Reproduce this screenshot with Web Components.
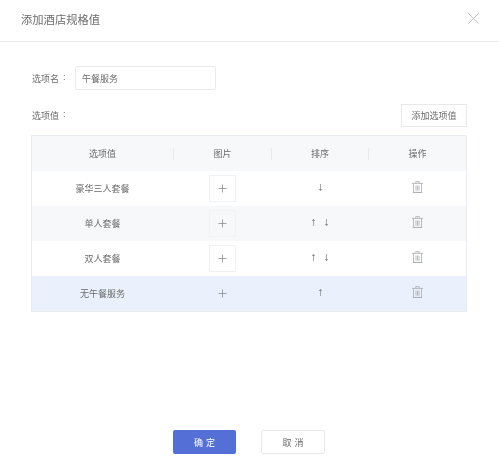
<!DOCTYPE html>
<html lang="zh"><head><meta charset="utf-8"><title>添加酒店规格值</title>
<style>html,body{margin:0;padding:0;background:#fff}body{font-family:"Liberation Sans","Noto Sans CJK SC",sans-serif;color:#666}</style>
</head><body>
<spec-dialog></spec-dialog>
<template id="t-dialog">
<style>
:host{display:flex;flex-direction:column;width:499px;height:471px;box-sizing:border-box;font:9px "Liberation Sans","Noto Sans CJK SC",sans-serif;color:#6b6b6b;overflow:hidden;filter:blur(.3px)}
header{height:42px;flex:none;box-sizing:border-box;border-bottom:1px solid #ebecee;display:flex;align-items:center;justify-content:space-between;padding:0 20px 4px 21px}
h1{margin:0;font-size:11.3px;font-weight:400;color:#6b6b6b}
svg{display:block}
main{flex:1;padding:24px 32px 0 31px;display:flex;flex-direction:column}
.name{display:flex;align-items:center;height:24px}
.lab{width:43px;flex:none;display:flex;gap:4px;padding-left:1px}
.inp{width:141px;height:24px;box-sizing:border-box;border:1px solid #e8eaec;border-radius:2px;padding:0 6px;display:flex;align-items:center}
.val{display:flex;align-items:center;justify-content:space-between;margin:14px 0 8px;height:23px}
.add{width:66px;height:23px;box-sizing:border-box;border:1px solid #e6e8ea;display:flex;align-items:center;justify-content:center;font-size:9px}
footer{flex:none;display:flex;gap:25px;padding:0 0 17px 173px}
.btn{width:64px;height:24px;box-sizing:border-box;border-radius:2px;display:flex;align-items:center;justify-content:center;gap:3px;font-size:9px}
.ok{background:#5470d6;color:#fff;width:63px}
.no{border:1px solid #e6e8ea}
</style>
<header><h1>添加酒店规格值</h1>
<svg width="11" height="11" viewBox="0 0 11 11" fill="none" stroke="#b4b6b9" stroke-width=".8"><path d="M.3.3l10.400 10.400M10.700.3L.3 10.700"/></svg></header>
<main>
<div class="name"><span class="lab"><span>选项名</span><span>:</span></span><div class="inp">午餐服务</div></div>
<div class="val"><span class="lab"><span>选项值</span><span>:</span></span><div class="add">添加选项值</div></div>
<spec-table>
<spec-row name="豪华三人套餐" down></spec-row>
<spec-row name="单人套餐" up down tone="alt"></spec-row>
<spec-row name="双人套餐" up down></spec-row>
<spec-row name="无午餐服务" up tone="sel" flat></spec-row>
</spec-table>
</main>
<footer><div class="btn ok"><span>确</span><span>定</span></div><div class="btn no"><span>取</span><span>消</span></div></footer>
</template>
<template id="t-table">
<style>
:host{display:block;width:436px;box-sizing:border-box;border:1px solid #e8ebef}
.h{display:grid;grid-template-columns:141px 98px 97px 1fr;height:35px;background:#f6f8fa;align-items:center;text-align:center}
.h div{height:12px;line-height:12px;border-left:1px solid #e8eaed;box-sizing:border-box}
.h div:first-child{border-left:0}
</style>
<div class="h"><div>选项值</div><div>图片</div><div>排序</div><div>操作</div></div>
<slot></slot>
</template>
<template id="t-row">
<style>
:host{display:grid;grid-template-columns:141px 98px 97px 1fr;height:35px;align-items:center;text-align:center;background:#fff}
:host([tone=alt]){background:#f7f8fa}
:host([tone=sel]){background:#eaf1fd}
.up{display:flex;justify-content:center}
.trash{margin-bottom:3px}
.pic{width:27px;height:27px;box-sizing:border-box;border:1px solid #f0f1f3;display:flex;align-items:center;justify-content:center;padding-bottom:1px}
:host([flat]) .pic{border-color:transparent}
:host([tone=alt]) .pic{border-color:#f2f3f5}
.arrows{display:flex;justify-content:center;gap:8px;margin:0 0 3px 1px}
svg{display:block}
</style>
<div class="n"></div>
<div class="up"><div class="pic"><svg width="9" height="9" viewBox="0 0 9 9" stroke="#8a8d91" stroke-width=".8"><path d="M4.500.5v8M.5 4.500h8"/></svg></div></div>
<div class="arrows">
<svg class="a-up" width="5" height="9" viewBox="0 0 5 9" fill="none"><path d="M2.500 2v6" stroke="#8f9296" stroke-width=".8"/><path d="M.8 3L2.500.7 4.200 3z" fill="#8f9296"/></svg>
<svg class="a-down" width="5" height="9" viewBox="0 0 5 9" fill="none"><path d="M2.500 1v6" stroke="#8f9296" stroke-width=".8"/><path d="M.8 6l1.700 2.300L4.200 6z" fill="#8f9296"/></svg>
</div>
<div class="up trash"><svg width="11" height="12" viewBox="0 0 11 12" fill="none" stroke="#a9acb0" stroke-width=".8"><path d="M0 2.400h11M3.800 2.400V.6h3.400v1.800M1.500 2.400v9h8v-9M4 4.500v5.200M5.500 4.500v5.200M7 4.500v5.200M.8 11.500h9.400"/></svg></div>
</template>
<script>
function def(name,tid,init){customElements.define(name,class extends HTMLElement{
  constructor(){super();this.attachShadow({mode:"open"}).appendChild(document.getElementById(tid).content.cloneNode(true));}
  connectedCallback(){if(init)init(this);}
});}
def("spec-table","t-table");
def("spec-row","t-row",el=>{
  const s=el.shadowRoot;
  s.querySelector(".n").textContent=el.getAttribute("name");
  if(!el.hasAttribute("up"))s.querySelector(".a-up").style.display="none";
  if(!el.hasAttribute("down"))s.querySelector(".a-down").style.display="none";
});
def("spec-dialog","t-dialog");
</script>
</body></html>
